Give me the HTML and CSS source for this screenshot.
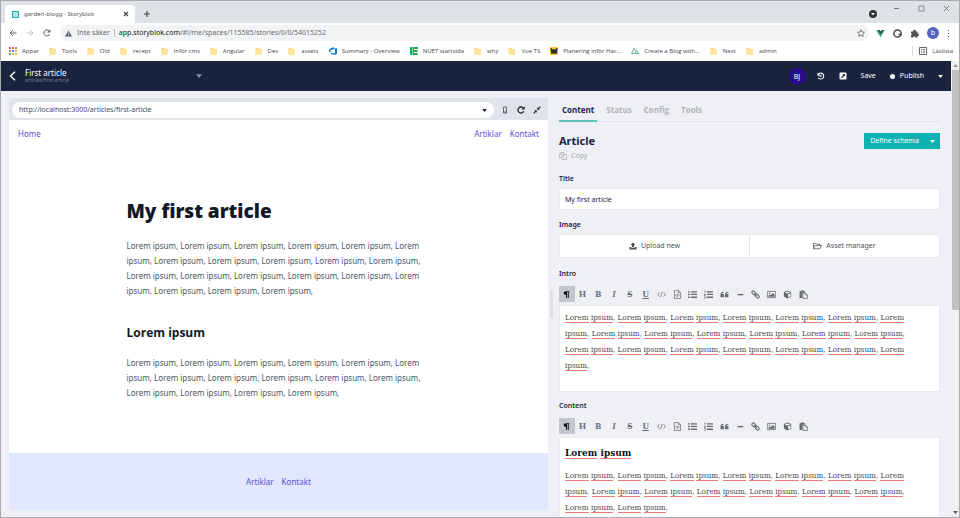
FILE: index.html
```html
<!DOCTYPE html>
<html lang="sv">
<head>
<meta charset="utf-8">
<title>garden-blogg - Storyblok</title>
<link rel="stylesheet" href="styles.css">
</head>
<body>
<svg class="sprite" aria-hidden="true">
  <symbol id="folder" viewBox="0 0 8 8"><path d="M.5 1h3l.6 1H7v5.500H.5z" fill="#fcd878"/><path d="M.5 2.600H7V7.500H.5z" fill="#ffe59a"/></symbol>
  <symbol id="caret" viewBox="0 0 8 5"><path d="M0 0h8L4 5z" fill="currentColor"/></symbol>
  <symbol id="i-para" viewBox="0 0 16 16"><path d="M13 2v1.500h-1V14h-1.700V3.500H9V14H7.300V9C4.800 9 3 7.500 3 5.500S4.800 2 7.300 2z" fill="currentColor"/></symbol>
  <symbol id="i-list" viewBox="0 0 16 16"><path d="M0 2h3v2.600H0zM0 6.700h3v2.600H0zM0 11.400h3V14H0zM5 2h11v2.300H5zM5 6.800h11v2.300H5zM5 11.600h11V14H5z" fill="currentColor"/></symbol>
  <symbol id="i-olist" viewBox="0 0 16 16"><path d="M1 1h1.500v3.500H1zM0 6.500h3v1L1.500 9H3v1H0V9l1.500-1.500H0zM0 11.500h3V15H0v-1h2v-.5H.7v-.8H2v-.3H0zM5 2h11v2.300H5zM5 6.800h11v2.300H5zM5 11.600h11V14H5z" fill="currentColor"/></symbol>
  <symbol id="i-quote" viewBox="0 0 16 16"><path d="M7 3v1.500C5 4.700 4 5.600 4 7h3v6H.8V8C.8 5 3 3 7 3zM15 3v1.500C13 4.700 12 5.600 12 7h3v6H8.800V8c0-3 2.200-5 6.200-5z" fill="currentColor"/></symbol>
  <symbol id="i-rule" viewBox="0 0 16 16"><path d="M3 7h10v2.500H3z" fill="currentColor"/></symbol>
  <symbol id="i-code" viewBox="0 0 16 16"><path d="M4.500 4 1 8l3.500 4M11.500 4 15 8l-3.500 4M9.300 3 6.700 13" fill="none" stroke="currentColor" stroke-width="1.300"/></symbol>
  <symbol id="i-filecode" viewBox="0 0 16 16"><path d="M2.500 1h7l4 4v10h-11zM9.500 1v4h4M6.500 7.500l-2 2 2 2M9.500 7.500l2 2-2 2M8.500 7l-1 5" fill="none" stroke="currentColor" stroke-width="1.300"/></symbol>
  <symbol id="i-link" viewBox="0 0 16 16"><g fill="none" stroke="currentColor" stroke-width="2" transform="rotate(45 8 8)"><rect x="0" y="5.500" width="7.500" height="5" rx="2.500"/><rect x="8.500" y="5.500" width="7.500" height="5" rx="2.500"/><path d="M5 8h6"/></g></symbol>
  <symbol id="i-image" viewBox="0 0 16 16"><path d="M.7 2.500h14.600v11H.7z" fill="none" stroke="currentColor" stroke-width="1.400"/><circle cx="4.500" cy="5.800" r="1.400" fill="currentColor"/><path d="M2.500 12V10l2.300-2 1.500 1.500L10.500 5.500l3 3V12z" fill="currentColor"/></symbol>
  <symbol id="i-cube" viewBox="0 0 16 16"><path d="M8 1l6.500 2.500v8L8 15l-6.500-3.500v-8z" fill="currentColor"/><path d="M3 4.300 8 2.600l5 1.700-5 2zM9 7.700l4.300-1.900v5.100L9 13z" fill="#eff0f5"/></symbol>
  <symbol id="i-paste" viewBox="0 0 16 16"><path d="M1 2h2.500V1h5v1H11v3H6v9H1z" fill="currentColor"/><path d="M7 6h5l3 3v6H7zM12 6v3h3" fill="#eff0f5" stroke="currentColor" stroke-width="1.300"/></symbol>
</svg>

<div class="browser">
  <header class="tabstrip">
    <div class="browser-tab">
      <svg class="favicon" viewBox="0 0 8 8"><path d="M0 0h8v8H0z" fill="#16b3ac"/><path d="M1.500 1.500h5v5h-5z" fill="#fff"/><path d="M2.600 2.500h2.700v3H2.600z" fill="#8fdcd8"/></svg>
      <span class="browser-tab-title">garden-blogg - Storyblok</span>
      <button class="plain" aria-label="Stäng flik"><svg width="6" height="6" viewBox="0 0 6 6"><path d="M1 1l4 4M5 1 1 5" stroke="#444" stroke-width="1.100"/></svg></button>
    </div>
    <button class="plain new-tab" aria-label="Ny flik"><svg width="8" height="8" viewBox="0 0 8 8"><path d="M4 1v6M1 4h6" stroke="#444" stroke-width="1.200"/></svg></button>
    <div class="window-buttons">
      <svg class="media" width="8" height="8" viewBox="0 0 8 8"><circle cx="4" cy="4" r="4" fill="#303236"/><path d="M2 3h4L4 5.500z" fill="#fff"/></svg>
      <button class="plain" aria-label="Minimera"><svg width="7" height="7" viewBox="0 0 7 7"><path d="M1 3.500h5" stroke="#777"/></svg></button>
      <button class="plain" aria-label="Maximera"><svg width="7" height="7" viewBox="0 0 7 7"><path d="M1 1h5v5H1z" fill="none" stroke="#777" stroke-width=".8"/></svg></button>
      <button class="plain" aria-label="Stäng"><svg width="7" height="7" viewBox="0 0 7 7"><path d="M1 1l5 5M6 1 1 6" stroke="#666" stroke-width=".8"/></svg></button>
    </div>
  </header>

  <div class="addressbar">
    <button class="plain" aria-label="Bakåt"><svg width="8" height="8" viewBox="0 0 8 8"><path d="M7.500 4H1M4 1 1 4l3 3" fill="none" stroke="#555" stroke-width=".9"/></svg></button>
    <button class="plain" aria-label="Framåt"><svg width="8" height="8" viewBox="0 0 8 8"><path d="M.5 4H7M4 1l3 3-3 3" fill="none" stroke="#bbb" stroke-width=".9"/></svg></button>
    <button class="plain" aria-label="Ladda om"><svg width="8" height="8" viewBox="0 0 8 8"><path d="M6.700 5.200A3 3 0 1 1 6.300 2" fill="none" stroke="#555"/><path d="M7.300.5v3h-3z" fill="#555"/></svg></button>
    <div class="omnibox">
      <svg width="7" height="7" viewBox="0 0 8 8"><path d="M4 .5 8 7.500H0z" fill="#5f6368"/><path d="M4 3v2.200M4 5.800v.9" stroke="#f1f3f4" stroke-width=".8"/></svg>
      <span>Inte säker</span><span class="bar"></span>
      <span class="address"><b>app.storyblok.com</b>/#!/me/spaces/115585/stories/0/0/54015252</span>
      <svg width="8" height="8" viewBox="0 0 16 16"><path d="M8 1.500l2 4.500 5 .5-3.800 3.300 1.200 4.900L8 12.100l-4.400 2.600 1.200-4.900L1 6.500 6 6z" fill="none" stroke="#555" stroke-width="1.500"/></svg>
    </div>
    <div class="extensions">
      <svg width="9" height="9" viewBox="0 0 9 9"><path d="M0 1h3.500l1 1.800 1-1.800H9L4.500 8.500z" fill="#41b883"/><path d="M1.800 1h1.700l1 1.800 1-1.800h1.700L4.500 5.700z" fill="#35495e"/></svg>
      <svg width="9" height="9" viewBox="0 0 9 9"><circle cx="4.500" cy="4.500" r="3.600" fill="none" stroke="#444" stroke-width="1.500"/><path d="M4.500 4.800h3.800v3z" fill="#444"/></svg>
      <svg width="9" height="9" viewBox="0 0 9 9"><path d="M1 2.500h2.200a1.300 1.300 0 1 1 2.500 0H7.500v2a1.200 1.200 0 1 1 0 2.300v1.700H5.300a1.100 1.100 0 0 0-2.200 0H1V6.400a1.100 1.100 0 0 0 0-2.100z" fill="#505356"/></svg>
      <span class="profile">b</span>
      <svg width="3" height="9" viewBox="0 0 3 9"><path d="M1 1h1v1H1zM1 4h1v1H1zM1 7h1v1H1z" fill="#555"/></svg>
    </div>
  </div>

  <nav class="bookmarks" aria-label="Bokmärken">
    <a href="#"><svg viewBox="0 0 8 8"><path d="M0 0h2v2H0zM3 0h2v2H3z" fill="#ea6a5e"/><path d="M6 0h2v2H6zM0 3h2v2H0z" fill="#e5803f"/><path d="M3 3h2v2H3z" fill="#4285f4"/><path d="M6 3h2v2H6zM3 6h2v2H3zM6 6h2v2H6z" fill="#f1b632"/><path d="M0 6h2v2H0z" fill="#41a35a"/></svg>Appar</a>
    <a href="#"><svg><use href="#folder"/></svg>Tools</a>
    <a href="#"><svg><use href="#folder"/></svg>Old</a>
    <a href="#"><svg><use href="#folder"/></svg>recept</a>
    <a href="#"><svg><use href="#folder"/></svg>Inför cms</a>
    <a href="#"><svg><use href="#folder"/></svg>Angular</a>
    <a href="#"><svg><use href="#folder"/></svg>Dev</a>
    <a href="#"><svg><use href="#folder"/></svg>assets</a>
    <a href="#"><svg viewBox="0 0 8 8"><path d="M0 3l1.500-1.500L5 0v1.500l3-.3v5.600L6 8 3 7v1L1.500 6l4.500.5V2L1.500 3v2.500L0 5z" fill="#0078d4"/></svg>Summary - Overview</a>
    <a href="#"><svg viewBox="0 0 8 8"><path d="M0 0h2v8H0zM2.500 0H8v2H4v1h3.500v2H4v1h3.500v2h-5z" fill="#1faa59"/></svg>NUET startsida</a>
    <a href="#"><svg><use href="#folder"/></svg>why</a>
    <a href="#"><svg><use href="#folder"/></svg>Vue TS</a>
    <a href="#"><svg viewBox="0 0 8 8"><path d="M0 0h8v8H0z" fill="#f6cf32"/><path d="M1 1l1 6 1-5 1 5 1-5 1 5 1-6" fill="none" stroke="#222" stroke-width="1.200"/></svg>Planering inför Hac...</a>
    <a href="#"><svg viewBox="0 0 8 8"><path d="M3 6.500H.5L3.200 1.500l1 1.800M3.800 6.500 5.500 3.300l2 3.200z" fill="none" stroke="#2e9b75" stroke-width=".8"/></svg>Create a Blog with...</a>
    <a href="#"><svg><use href="#folder"/></svg>Next</a>
    <a href="#"><svg><use href="#folder"/></svg>admin</a>
    <a href="#" class="reading-list"><svg viewBox="0 0 8 8"><path d="M.5.500h7v7h-7z" fill="none" stroke="#555" stroke-width=".9"/><path d="M2 2.500h1M3.800 2.500H6M2 4h1M3.800 4H6M2 5.500h1M3.800 5.500H6" stroke="#555" stroke-width=".7"/></svg>Läslista</a>
  </nav>

  <div class="viewport">
    <div class="app">
      <header class="topbar">
        <button class="plain" aria-label="Back"><svg width="7" height="10" viewBox="0 0 7 10"><path d="M6 .8 1.500 5 6 9.200" fill="none" stroke="#fff" stroke-width="1.400"/></svg></button>
        <div class="story"><strong>First article</strong><small>articles/first-article</small></div>
        <button class="plain story-menu" aria-label="Story menu"><svg width="6" height="4"><use href="#caret"/></svg></button>
        <div class="actions">
          <span class="avatar">BJ</span>
          <button class="plain" aria-label="History"><svg width="8" height="8" viewBox="0 0 16 16"><path d="M3 4a6 6 0 1 1-.5 7.500" fill="none" stroke="#fff" stroke-width="2.200"/><path d="M1 1v6.500h6.500zM7.500 4.500H9v5H5.500V8h2z" fill="#fff"/></svg></button>
          <button class="plain" aria-label="Open preview"><svg width="8" height="8" viewBox="0 0 16 16"><rect x="1" y="1" width="14" height="14" rx="2" fill="#fff"/><path d="M7 4h5v5L10.500 7.500 5.500 12.500 3.800 10.800 8.800 5.800z" fill="#1b243f"/></svg></button>
          <button class="plain">Save</button>
          <button class="plain publish"><i></i>Publish</button>
          <button class="plain" aria-label="Publish options"><svg width="5" height="3" viewBox="0 0 8 5"><path d="M0 0h8L4 5z" fill="#fff"/></svg></button>
        </div>
      </header>

      <main class="workspace">
        <section class="preview" aria-label="Preview">
          <div class="preview-bar">
            <div class="preview-url"><input type="text" aria-label="Preview URL" value="http://localhost:3000/articles/first-article"><svg width="5" height="3" viewBox="0 0 8 5"><path d="M0 0h8L4 5z" fill="#1b243f"/></svg></div>
            <button class="plain" aria-label="Mobile"><svg width="8" height="8" viewBox="0 0 8 8"><path d="M2.500 1h3v6h-3zM2.500 6h3" fill="none" stroke="#555c70" stroke-width=".9"/></svg></button>
            <button class="plain" aria-label="Reload"><svg width="8" height="8" viewBox="0 0 8 8"><path d="M6.700 5.300A3 3 0 1 1 6.200 2" fill="none" stroke="#1b243f" stroke-width="1.300"/><path d="M7.700.3v3.200H4.500z" fill="#1b243f"/></svg></button>
            <button class="plain" aria-label="Collapse"><svg width="8" height="8" viewBox="0 0 8 8"><path d="M4.200 3.800V1.200l.9.900L7 .3l.7.700-1.800 1.900.9.900zM3.800 4.200v2.600l-.9-.9L1 7.700.3 7l1.800-1.900-.9-.9z" fill="#1b243f"/></svg></button>
          </div>
          <div class="site">
            <nav class="site-nav"><a href="#">Home</a><a href="#">Artiklar</a><a href="#">Kontakt</a></nav>
            <article>
              <h1>My first article</h1>
              <p>Lorem ipsum, Lorem ipsum, Lorem ipsum, Lorem ipsum, Lorem ipsum, Lorem
ipsum, Lorem ipsum, Lorem ipsum, Lorem ipsum, Lorem ipsum, Lorem ipsum,
Lorem ipsum, Lorem ipsum, Lorem ipsum, Lorem ipsum, Lorem ipsum, Lorem
ipsum, Lorem ipsum, Lorem ipsum, Lorem ipsum,</p>
              <h2>Lorem ipsum</h2>
              <p>Lorem ipsum, Lorem ipsum, Lorem ipsum, Lorem ipsum, Lorem ipsum, Lorem
ipsum, Lorem ipsum, Lorem ipsum, Lorem ipsum, Lorem ipsum, Lorem ipsum,
Lorem ipsum, Lorem ipsum, Lorem ipsum, Lorem ipsum,</p>
            </article>
            <footer><a href="#">Artiklar</a><a href="#">Kontakt</a></footer>
          </div>
        </section>

        <div class="splitter"><i></i></div>

        <section class="editor" aria-label="Editor">
          <nav class="tabs"><button class="active">Content</button><button>Status</button><button>Config</button><button>Tools</button></nav>
          <div class="component">
            <div>
              <h2>Article</h2>
              <button class="plain copy"><svg width="8" height="8" viewBox="0 0 16 16"><path d="M5 11H1V4.500L4.500 1H10v3M4.500 1v3.500H1M6 15V8l3-3.500h6V15zM9.500 4.500V8H6" fill="none" stroke="currentColor" stroke-width="1.400"/></svg>Copy</button>
            </div>
            <div class="schema"><button>Define schema</button><button aria-label="Schema options"><svg width="5" height="3" viewBox="0 0 8 5"><path d="M0 0h8L4 5z" fill="#fff"/></svg></button></div>
          </div>
          <label class="field" for="title">Title</label>
          <input class="text-input" id="title" type="text" value="My first article">
          <span class="field">Image</span>
          <div class="image-buttons">
            <button><svg width="8" height="8" viewBox="0 0 16 16"><path d="M8 1l5 5h-3v4H6V6H3zM1 10h3.500v1.500h7V10H15v5H1z" fill="currentColor"/></svg>Upload new</button>
            <button><svg width="9" height="8" viewBox="0 0 18 16"><path d="M1 13V2.500h5l1.500 2H14V7M1 13.500 4 7h13l-3 6.500z" fill="none" stroke="currentColor" stroke-width="1.500"/></svg>Asset manager</button>
          </div>
          <span class="field" id="intro-label">Intro</span>
          <div class="tools" role="toolbar" aria-labelledby="intro-label"></div>
          <div class="rich intro" contenteditable="true" spellcheck="false" role="textbox" aria-labelledby="intro-label"><p>Lorem ipsum, Lorem ipsum, Lorem ipsum, Lorem ipsum, Lorem ipsum, Lorem ipsum, Lorem
ipsum, Lorem ipsum, Lorem ipsum, Lorem ipsum, Lorem ipsum, Lorem ipsum, Lorem ipsum,
Lorem ipsum, Lorem ipsum, Lorem ipsum, Lorem ipsum, Lorem ipsum, Lorem ipsum, Lorem
ipsum,</p></div>
          <span class="field" id="content-label">Content</span>
          <div class="tools" role="toolbar" aria-labelledby="content-label"></div>
          <div class="rich body" contenteditable="true" spellcheck="false" role="textbox" aria-labelledby="content-label"><h3>Lorem ipsum</h3><p>Lorem ipsum, Lorem ipsum, Lorem ipsum, Lorem ipsum, Lorem ipsum, Lorem ipsum, Lorem
ipsum, Lorem ipsum, Lorem ipsum, Lorem ipsum, Lorem ipsum, Lorem ipsum, Lorem ipsum,
Lorem ipsum, Lorem ipsum,</p></div>
        </section>
      </main>
    </div>
    <div class="scrollbar" aria-hidden="true"><svg width="5" height="3" viewBox="0 0 8 5"><path d="M0 5h8L4 0z" fill="#999"/></svg><i></i><svg width="5" height="3" viewBox="0 0 8 5"><path d="M0 0h8L4 5z" fill="#555"/></svg></div>
  </div>
</div>
<script src="app.js"></script>
</body>
</html>
```
FILE: styles.css
```css
* { box-sizing: border-box; }
body { margin: 0; font-family: "Noto Sans", "Open Sans", sans-serif; font-size: 7px; line-height: 10px; color: #1b243f; }
button, input { font: inherit; color: inherit; margin: 0; }
a { text-decoration: none; color: inherit; }
h1, h2, h3, p { margin: 0; }
svg { display: block; flex: none; }
.sprite { display: none; }
.plain { display: flex; align-items: center; border: 0; padding: 0; background: none; }

.browser { height: 100vh; display: flex; flex-direction: column; overflow: hidden; border: 1px solid #a9abb1; background: #fff; }
.tabstrip { height: 22px; flex: none; display: flex; align-items: flex-end; background: #dee1e6; }
.browser-tab { width: 130px; height: 18px; margin-left: 4px; padding: 0 6px 0 7px; display: flex; align-items: center; gap: 5px; border-radius: 4px 4px 0 0; background: #fff; }
.favicon { width: 7px; height: 7px; }
.browser-tab-title { flex: 1; font-size: 6px; color: #55585c; white-space: nowrap; }
.new-tab { height: 18px; margin-left: 8px; }
.window-buttons { margin-left: auto; height: 22px; padding: 4px 9px 0 0; display: flex; gap: 18px; align-items: flex-start; }
.window-buttons .media { align-self: center; margin-right: -2px; }

.addressbar { height: 20px; flex: none; padding: 0 9px 0 8px; display: flex; align-items: center; gap: 9px; }
.omnibox { flex: 1; height: 16px; border-radius: 8px; padding: 0 4px 0 5px; display: flex; align-items: center; gap: 5px; background: #f1f3f4; color: #6a6d72; }
.bar { width: 1px; height: 8px; background: #bbb; margin: 0 -1px; }
.address { flex: 1; }
.address b { font-weight: 400; color: #202124; }
.extensions { display: flex; align-items: center; gap: 8px; margin-left: -2px; }
.profile { width: 12px; height: 12px; border-radius: 50%; background: #5464b8; color: #fff; text-align: center; line-height: 12px; }

.bookmarks { height: 18px; flex: none; padding: 0 6px 2px 8px; display: flex; align-items: center; gap: 10px; font-family: "Open Sans", sans-serif; font-size: 6px; color: #45484c; white-space: nowrap; }
.bookmarks a { display: flex; align-items: center; gap: 5px; }
.bookmarks svg { width: 8px; height: 8px; }
.reading-list { margin-left: auto; padding-left: 6px; border-left: 1px solid #ddd; }

.viewport { flex: 1; min-height: 0; display: flex; background: #eff0f5; }
.app { flex: 1; min-width: 0; display: flex; flex-direction: column; }
.topbar { height: 30px; flex: none; display: flex; align-items: center; padding: 0 8px; background: #1b243f; color: #fff; }
.story { width: 164px; margin-left: 9px; display: flex; flex-direction: column; }
.story strong { font-size: 8px; font-weight: 400; line-height: 9px; }
.story small { font-size: 5px; line-height: 7px; color: #747b91; }
.story-menu { margin-left: 7px; color: #8b91a3; }
.actions { margin-left: auto; display: flex; align-items: center; gap: 14px; }
.avatar { width: 17px; height: 17px; margin-right: -3px; border-radius: 50%; background: #2b0a8c; line-height: 17px; text-align: center; }
.publish { gap: 5px; }
.publish i { width: 5px; height: 5px; border-radius: 50%; background: #fff; }

.workspace { flex: 1; min-height: 0; display: flex; padding-left: 8px; overflow: hidden; }
.preview { flex: 539; min-width: 0; margin: 7px 0; display: flex; flex-direction: column; }
.preview-bar { height: 22px; flex: none; display: flex; align-items: center; gap: 8px; padding: 2px 7px 0 3px; background: #e1e3ea; }
.preview-url { flex: 1; height: 16px; margin-right: -1px; padding: 0 7px; display: flex; align-items: center; border-radius: 8px; background: #fff; }
.preview-url input { flex: 1; border: 0; padding: 0; background: none; color: #434a5e; outline: 0; }
.site { flex: 1; min-height: 0; display: flex; flex-direction: column; background: #fff; font-size: 8px; }
.site a { color: #5b50d6; }
.site-nav { height: 28px; display: flex; align-items: center; gap: 8px; padding: 0 9px; }
.site-nav a:first-child { margin-right: auto; }
article { flex: 1; width: 304px; margin: 0 auto; padding-top: 50px; }
article h1 { font-family: "Open Sans", sans-serif; font-size: 19px; font-weight: 800; line-height: 26px; color: #111827; white-space: nowrap; }
article h2 { margin: 26px 0 13px; font-family: "Open Sans", sans-serif; font-size: 12px; font-weight: 700; line-height: 18px; color: #111827; }
article p { line-height: 15px; color: #4b5563; white-space: pre; }
article h1 + p { margin-top: 14px; }
.site footer { height: 57px; flex: none; display: flex; align-items: center; justify-content: center; gap: 8px; background: #e0e7ff; }

.splitter { width: 11px; flex: none; display: flex; align-items: center; }
.splitter i { width: 3px; height: 28px; margin-left: 2px; border-radius: 2px; background: #dfe1e8; }
.editor { flex: 381; min-width: 0; margin: 7px 11px 0 0; display: flex; flex-direction: column; }
.tabs { height: 24px; flex: none; display: flex; gap: 6px; border-bottom: 1px solid #e0e2e8; }
.tabs button { height: 24px; padding: 2px 3px 0; border: 0; border-bottom: 2px solid transparent; background: none; font-family: "Open Sans", sans-serif; font-size: 8px; font-weight: 700; color: #b1b3ba; }
.tabs .active { color: #1b243f; border-color: #5ec5bd; }
.component { height: 48px; flex: none; padding-top: 11px; display: flex; justify-content: space-between; align-items: flex-start; }
.component h2 { font-size: 11px; line-height: 16px; }
.copy { gap: 4px; margin-top: 1px; color: #a6a8b0; line-height: 12px; }
.schema { display: flex; height: 16px; background: #09b3af; color: #fff; }
.schema button { border: 0; padding: 0 6px; background: none; }
.schema button + button { padding: 0 5px; }
.field { height: 18px; flex: none; font-weight: 600; line-height: 18px; }
.text-input { height: 22px; flex: none; margin-bottom: 6px; border: 1px solid #eaebef; padding: 0 5px; background: #fff; outline: 0; }
.image-buttons { height: 24px; flex: none; margin-bottom: 7px; display: flex; border: 1px solid #eaebef; background: #fff; }
.image-buttons button { flex: 1; display: flex; align-items: center; justify-content: center; gap: 4px; border: 0; background: none; color: #4d5057; }
.image-buttons button + button { border-left: 1px solid #e7e8ec; }
.tools { height: 22px; max-width: 252px; flex: none; display: flex; align-items: center; }
.tools button { flex: 1; height: 16px; padding: 0; display: flex; align-items: center; justify-content: center; border: 0; border-radius: 1px; background: none; font-family: "Liberation Serif", serif; font-size: 9px; font-weight: 700; color: #686b73; }
.tools .active { background: #c3c6d0; color: #111; }
.tools svg { width: 9px; height: 9px; }
.rich { flex: none; padding: 4px 5px; border: 1px solid #eaebef; background: #fff; font-family: "DejaVu Serif Condensed", "DejaVu Serif", serif; font-size: 8px; color: #4a4a4a; outline: 0; }
.rich p { line-height: 16px; white-space: pre; }
.rich h3 { margin-bottom: 6px; padding-top: 2px; font-size: 10px; line-height: 18px; color: #111; }
.intro { height: 87px; margin-bottom: 5px; }
.misspelt { border-bottom: 1px solid #ee7777; }

.scrollbar { width: 8px; flex: none; padding: 3px 0; display: flex; flex-direction: column; align-items: center; background: #f1f1f1; }
.scrollbar i { width: 7px; height: 240px; margin: 3px 0 auto; background: #c1c1c1; }
```
FILE: app.js
```js
// Formatting buttons shared by every rich text field: name, then letter or icon id.
const tools = [
  ["Paragraph", "#i-para"], ["Heading", "H"], ["Bold", "B"], ["Italic", "<i>I</i>"],
  ["Strike", "<s>S</s>"], ["Underline", "<u>U</u>"], ["Code", "#i-code"], ["Code block", "#i-filecode"],
  ["Bullet list", "#i-list"], ["Numbered list", "#i-olist"], ["Quote", "#i-quote"], ["Rule", "#i-rule"],
  ["Link", "#i-link"], ["Image", "#i-image"], ["Block", "#i-cube"], ["Paste", "#i-paste"]
];
for (const bar of document.querySelectorAll(".tools")) {
  bar.innerHTML = tools.map(([name, face], i) =>
    `<button aria-label="${name}"${i ? "" : ' class="active"'}>${face[0] === "#" ? `<svg><use href="${face}"/></svg>` : face}</button>`
  ).join("");
}
for (const block of document.querySelectorAll(".rich p, .rich h3")) {
  block.innerHTML = block.textContent.replace(/\w+/g, '<span class="misspelt">$&</span>');
}
```
